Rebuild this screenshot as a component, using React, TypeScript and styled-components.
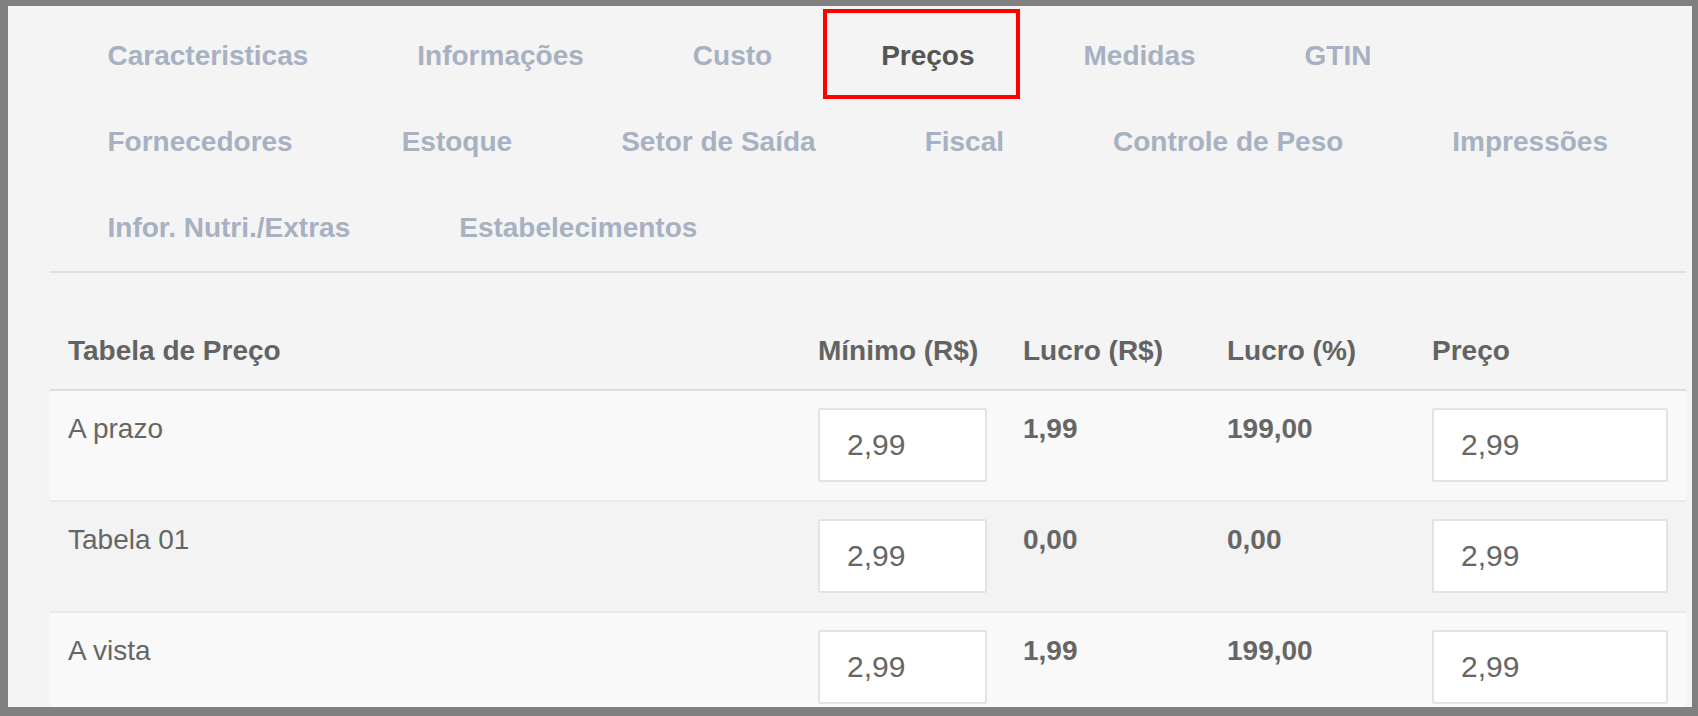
import React, { useState } from 'react'
import styled, { createGlobalStyle } from 'styled-components'

const GlobalStyle = createGlobalStyle`
  body {
    margin: 0;
    font-family: "Liberation Sans", Arial, sans-serif;
    background: #ffffff;
  }
`

const tabs = [
  'Caracteristicas',
  'Informações',
  'Custo',
  'Preços',
  'Medidas',
  'GTIN',
  'Fornecedores',
  'Estoque',
  'Setor de Saída',
  'Fiscal',
  'Controle de Peso',
  'Impressões',
  'Infor. Nutri./Extras',
  'Estabelecimentos',
]

const prices = [
  { id: 'prazo', name: 'A prazo', min: '2,99', profit: '1,99', percent: '199,00', price: '2,99' },
  { id: 't01', name: 'Tabela 01', min: '2,99', profit: '0,00', percent: '0,00', price: '2,99' },
  { id: 'vista', name: 'A vista', min: '2,99', profit: '1,99', percent: '199,00', price: '2,99' },
]

export default function App() {
  const [active, setActive] = useState('Preços')

  return (
    <>
      <GlobalStyle />
      <Frame>
        <TabList>
          {tabs.map(t => (
            <Tab key={t} $active={t === active} onClick={() => setActive(t)}>
              {t}
            </Tab>
          ))}
        </TabList>

        <PriceTable>
          <colgroup>
            <col style={{ width: 750 }} />
            <col style={{ width: 205 }} />
            <col style={{ width: 204 }} />
            <col style={{ width: 205 }} />
            <col />
          </colgroup>
          <thead>
            <tr>
              <HeadCell>Tabela de Preço</HeadCell>
              <HeadCell>Mínimo (R$)</HeadCell>
              <HeadCell>Lucro (R$)</HeadCell>
              <HeadCell>Lucro (%)</HeadCell>
              <HeadCell>Preço</HeadCell>
            </tr>
          </thead>
          <tbody>
            {prices.map(p => (
              <Row key={p.id}>
                <Cell>{p.name}</Cell>
                <Cell>
                  <ValueInput defaultValue={p.min} />
                </Cell>
                <Cell $bold>{p.profit}</Cell>
                <Cell $bold>{p.percent}</Cell>
                <Cell>
                  <ValueInput defaultValue={p.price} />
                </Cell>
              </Row>
            ))}
          </tbody>
        </PriceTable>
      </Frame>
    </>
  )
}

const Frame = styled.div`
  box-sizing: border-box;
  width: 1698px;
  height: 716px;
  overflow: hidden;
  border-style: solid;
  border-color: #808080;
  border-width: 6px 6px 9px 8px;
  padding: 7px 6px 0 42px;
  background-color: #f4f4f4;
`

const TabList = styled.div`
  display: flex;
  flex-wrap: wrap;
  padding-left: 3px;
  border-bottom: 2px solid #e1e1e1;
`

const Tab = styled.button<{ $active?: boolean }>`
  position: relative;
  height: 86px;
  padding: 0 54.5px;
  border: none;
  background: none;
  font-family: "Liberation Sans", Arial, sans-serif;
  font-size: 28px;
  font-weight: bold;
  line-height: 86px;
  color: ${p => (p.$active ? '#555555' : '#a7b1c2')};
  cursor: pointer;

  ${p =>
    p.$active &&
    `
    &::after {
      content: '';
      position: absolute;
      top: -4px;
      bottom: 0;
      left: -4px;
      right: 9px;
      border: 4px solid #ff0000;
    }
  `}
`

const PriceTable = styled.table`
  width: 100%;
  margin-top: 40px;
  table-layout: fixed;
  border-collapse: separate;
  border-spacing: 0;
`

const HeadCell = styled.th`
  padding: 17px 18px;
  border-bottom: 2px solid #dedede;
  text-align: left;
  font-size: 28px;
  font-weight: bold;
  line-height: 42px;
  color: #636363;
  white-space: nowrap;
`

const Row = styled.tr`
  background-color: #f9f9f9;

  &:nth-child(even) {
    background-color: #f3f3f3;
  }
`

const Cell = styled.td<{ $bold?: boolean }>`
  padding: 17px 18px 18px;
  border-bottom: 2px solid #e7ebee;
  vertical-align: top;
  font-size: 28px;
  font-weight: ${p => (p.$bold ? 'bold' : 'normal')};
  line-height: 42px;
  color: #666666;
`

const ValueInput = styled.input.attrs({ type: 'text' })`
  box-sizing: border-box;
  display: block;
  width: 100%;
  height: 74px;
  padding: 0 27px;
  border: 2px solid #e3e3e3;
  border-radius: 2px;
  background: #ffffff;
  font-family: "Liberation Sans", Arial, sans-serif;
  font-size: 30px;
  color: #666666;
  outline: none;
`
